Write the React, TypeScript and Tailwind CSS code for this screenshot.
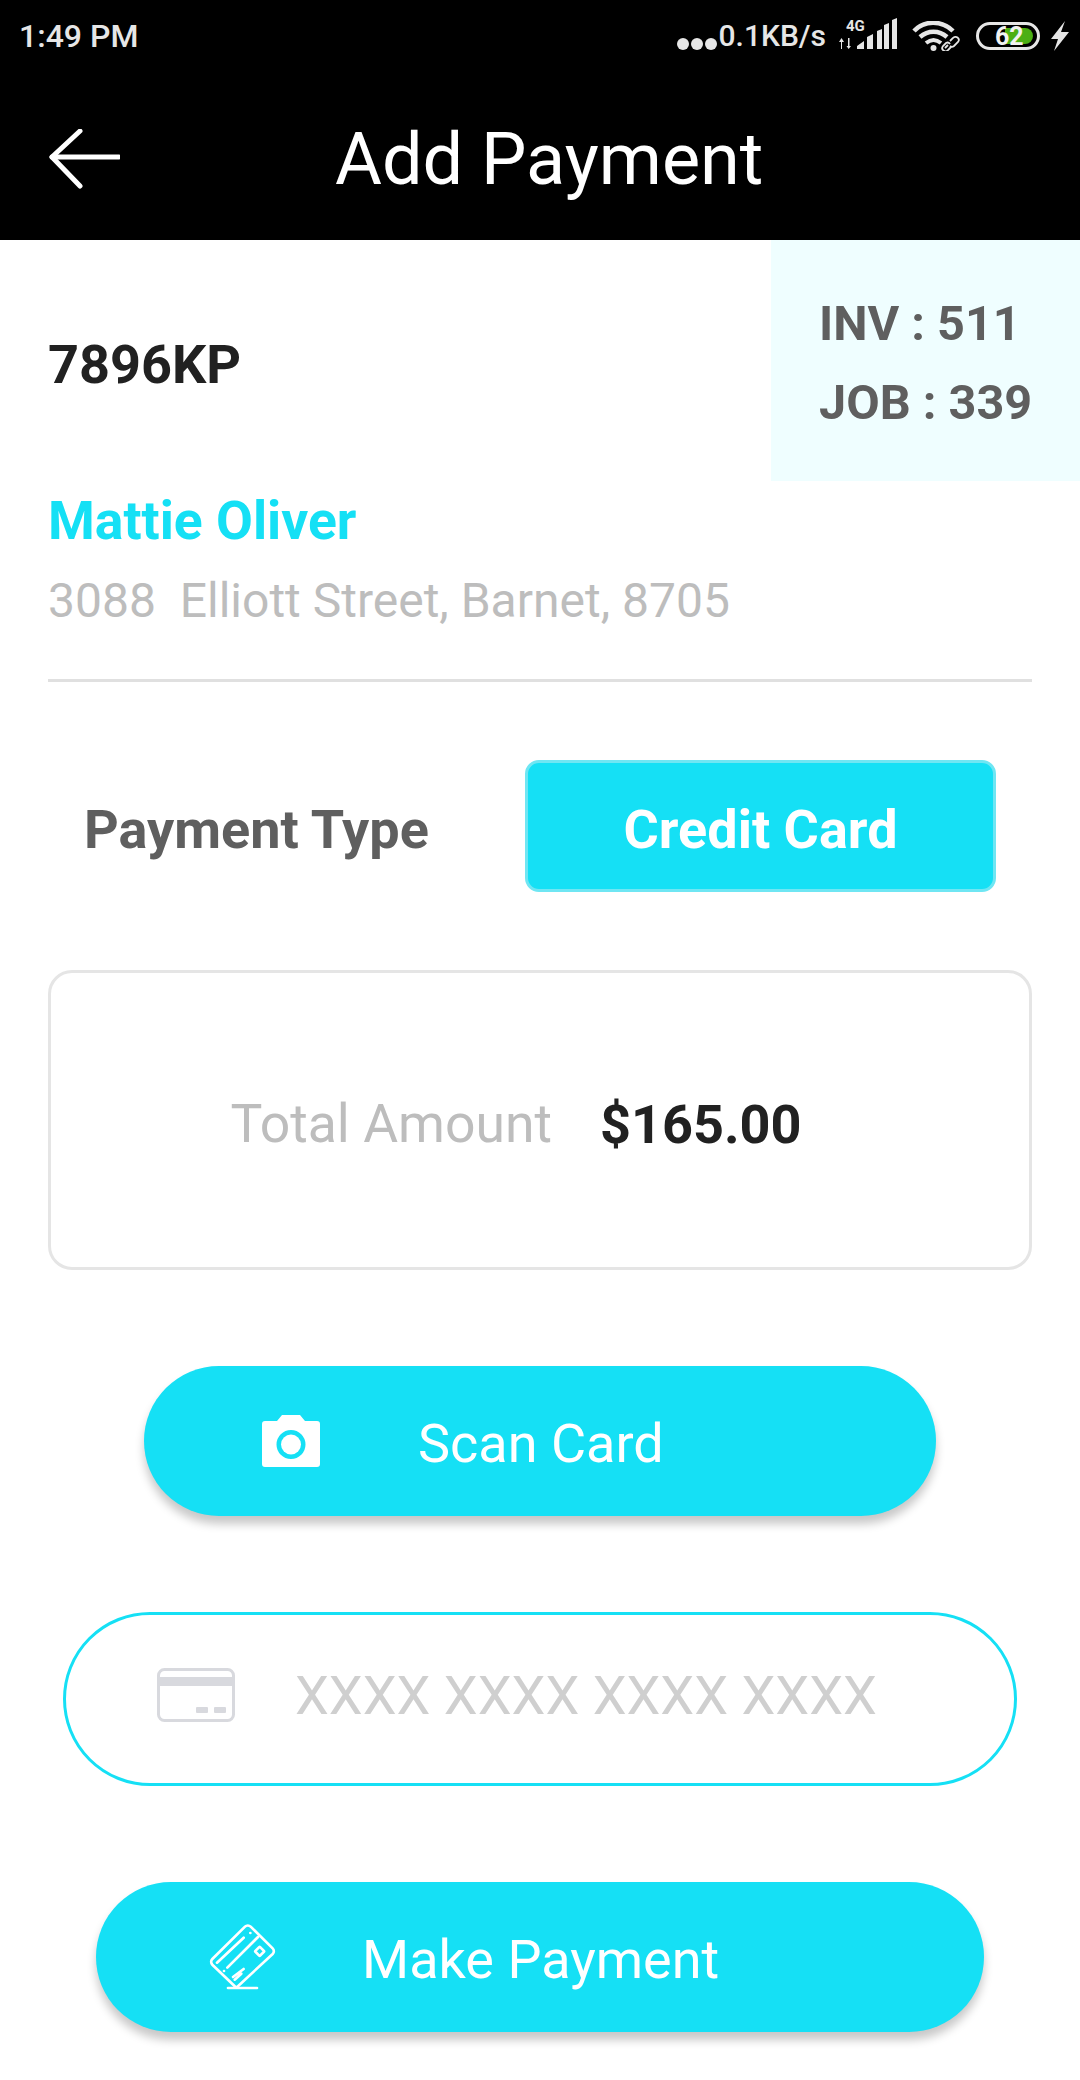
const font = { fontFamily: 'Roboto, sans-serif' }

function StatusIcons() {
  return (
    <div className="flex items-center h-[30px]">
      <div className="flex items-center gap-[2px] mt-[16px]">
        <span className="w-[12px] h-[12px] rounded-full bg-[#e6e6e6]" />
        <span className="w-[12px] h-[12px] rounded-full bg-[#e6e6e6]" />
        <span className="w-[12px] h-[12px] rounded-full bg-[#e6e6e6]" />
      </div>
      <span className="ml-[2px] text-[30px] leading-none font-medium text-[#e6e6e6]">0.1KB/s</span>
      {/* 4G + signal */}
      <svg width="61" height="36" viewBox="0 -4 61 36" className="ml-[10px] -mt-[8px]" fill="#e6e6e6">
        <path d="M3 24h5l-2.500 -4zM5 24h1v7H5zM12 20h1.500v8H12zM10.500 28h4.500l-2.300 3z" />
        <path d="M21 31v-3l7-5v8zM31 31V19l6-3v15zM41 31V13l5-2v20zM48 31V7l5-2v26zM56 31V2l5-2v31z" />
        <text x="10" y="13" fontSize="15" fontWeight="700" fontFamily="Roboto, sans-serif">4G</text>
      </svg>
      {/* wifi with link */}
      <svg width="48" height="30" viewBox="0 0 48 30" className="ml-[15px]" fill="none" stroke="#e6e6e6">
        <path d="M2 10C12 -1 30 -1 41 10" strokeWidth="4.500" />
        <path d="M8 16c8 -7 19 -7 27 0" strokeWidth="4.500" />
        <path d="M14 22c5 -4 10 -4 15 0" strokeWidth="4" />
        <circle cx="21.500" cy="27" r="3" fill="#e6e6e6" stroke="none" />
        <path d="M33 27l3-3M38 20l3-3a3 3 0 0 1 5 4l-4 4a3 3 0 0 1-4 0M38 23a3 3 0 0 0-4-1l-3 3a3 3 0 0 0 5 4l3-3" strokeWidth="1.800" />
      </svg>
      {/* battery */}
      <div className="ml-[16px] relative w-[64px] h-[28px] rounded-full border-[3px] border-[#e6e6e6] flex items-center">
        <div className="absolute left-[26px] top-[3px] w-[28px] h-[16px] rounded-r-full bg-[#4caf14]" />
        <span className="relative ml-[16px] text-[25px] leading-none font-bold text-[#f2f2f2]">62</span>
      </div>
      <svg width="20" height="30" viewBox="0 0 20 30" className="ml-[10px]" fill="#e6e6e6">
        <path d="M15 0L1 18h7L4 30l15-19h-8z" />
      </svg>
    </div>
  )
}

export default function App() {
  return (
    <div className="w-[1080px] h-[2080px] bg-white overflow-hidden" style={font}>
      {/* Header */}
      <div className="bg-black h-[240px]">
        <div className="h-[72px] pl-[19px] pr-[10px] flex items-center justify-between">
          <span className="text-[32px] font-medium text-[#e6e6e6]">1:49 PM</span>
          <StatusIcons />
        </div>
        <div className="flex items-center pl-[48px] h-[174px]">
          <svg width="72" height="60" viewBox="0 0 72 60" fill="none" stroke="white" strokeWidth="5" strokeLinecap="round" strokeLinejoin="round">
            <path d="M32 2L4 28l28 29" />
            <path d="M4 28h67" />
          </svg>
          <span className="ml-[215px] pt-[2px] text-[72px] leading-none text-white">Add Payment</span>
        </div>
      </div>

      {/* Vehicle + invoice */}
      <div className="flex justify-between h-[241px]">
        <div className="pl-[48px] pt-[7px] flex items-center text-[54px] font-bold text-[#212121]">7896KP</div>
        <div className="w-[309px] bg-[#effeff] pl-[48px] pt-[4px] flex flex-col justify-center gap-[24px] text-[48.6px] leading-[55px] font-bold text-[#5f5f5f]">
          <span>INV : 511</span>
          <span>JOB : 339</span>
        </div>
      </div>

      {/* Customer */}
      <div className="mx-[48px] h-[201px] pt-[12px] border-b-[3px] border-[#e0e0e0]">
        <div className="text-[53.5px] leading-[56px] font-bold text-[#15e0f5]">Mattie Oliver</div>
        <div className="text-[48px] leading-[54px] text-[#bdbdbd] mt-[25px] whitespace-pre">3088  Elliott Street, Barnet, 8705</div>
      </div>

      {/* Payment type */}
      <div className="flex items-center mt-[78px] pl-[84px]">
        <span className="w-[441px] pt-[6px] text-[54px] font-bold text-[#5f5f5f]">Payment Type</span>
        <div className="w-[471px] h-[132px] pt-[6px] rounded-[14px] bg-[#15e0f5] border-[3px] border-[#6fe6f3] flex items-center justify-center text-[54px] font-bold text-white">
          Credit Card
        </div>
      </div>

      {/* Total */}
      <div className="mx-[48px] mt-[78px] h-[300px] pt-[9px] pr-[48px] rounded-[24px] border-[3px] border-[#e5e5e5] flex items-center justify-center gap-[48px]">
        <span className="text-[53.5px] text-[#bdbdbd]">Total Amount</span>
        <span className="text-[54px] font-bold text-[#212121]">$165.00</span>
      </div>

      {/* Scan */}
      <div className="mx-[144px] mt-[96px] h-[150px] rounded-full bg-[#15e0f5] shadow-[0_8px_10px_rgba(0,0,0,0.22)] flex items-center pl-[118px]">
        <svg width="58" height="52" viewBox="0 0 58 52" fill="white">
          <path fillRule="evenodd" d="M3 6h12l5-6h18l5 6h12a3 3 0 0 1 3 3v40a3 3 0 0 1-3 3H3a3 3 0 0 1-3-3V9a3 3 0 0 1 3-3zM29 15a14.500 14.500 0 1 0 0 29 14.500 14.500 0 0 0 0-29z" />
          <circle cx="29" cy="29.500" r="10" />
        </svg>
        <span className="ml-[98px] pt-[4px] text-[54px] text-white">Scan Card</span>
      </div>

      {/* Card number */}
      <div className="mx-[63px] mt-[96px] h-[174px] pb-[8px] rounded-full border-[3px] border-[#15e0f5] flex items-center pl-[91px]">
        <svg width="78" height="54" viewBox="0 0 78 54" fill="none">
          <rect x="1.500" y="1.500" width="75" height="51" rx="6" stroke="#d8d9de" strokeWidth="3" />
          <rect x="3" y="9" width="72" height="9" fill="#d8d9de" />
          <rect x="39" y="39" width="12" height="6" rx="1" fill="#d8d9de" />
          <rect x="57" y="39" width="12" height="6" rx="1" fill="#d8d9de" />
        </svg>
        <span className="ml-[60px] text-[54px] text-[#cfcfcf]">XXXX XXXX XXXX XXXX</span>
      </div>

      {/* Make payment */}
      <div className="mx-[96px] mt-[96px] h-[150px] rounded-full bg-[#15e0f5] shadow-[0_8px_10px_rgba(0,0,0,0.22)] flex items-center pl-[112px]">
        <svg width="70" height="70" viewBox="85 125 210 210" fill="none" stroke="white" strokeWidth="8" strokeLinecap="round" strokeLinejoin="round">
          <path d="M98 236L196 139a12 12 0 0 1 17 0l66 65a12 12 0 0 1 0 17L170 322L98 253a12 12 0 0 1 0-17z" />
          <path d="M112 247L192 172M212 158h0.100M133 272h0.100M143 262L235 170" />
          <path d="M160 290L192 266M165 298L185 280" />
          <path d="M145 323h87" />
          <rect x="230" y="203" width="20" height="20" rx="2" transform="rotate(45 240 213)" />
        </svg>
        <span className="ml-[84px] pt-[4px] text-[54px] text-white">Make Payment</span>
      </div>
    </div>
  )
}
